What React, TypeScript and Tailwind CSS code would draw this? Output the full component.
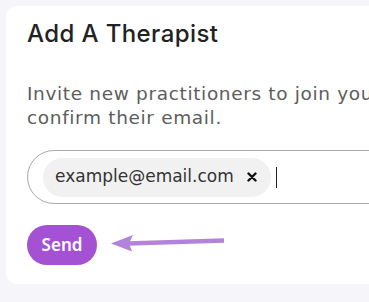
import React from "react";

export default function App() {
  return (
    <div className="w-[369px] h-[302px] overflow-hidden bg-[#f6f6fa] pt-[6px] pl-[6px]">
      <div className="w-[420px] h-[278px] bg-white rounded-l-[12px] pl-[21px] pt-[16px]">
        <h1 className="text-[24px] leading-[24px] font-medium text-[#222] font-['Inter',sans-serif] tracking-[0.4px] whitespace-nowrap">
          Add A Therapist
        </h1>
        <p className="mt-[36px] whitespace-nowrap text-[18.5px] leading-[24px] tracking-[0.65px] text-[#5d5d5d] font-['DejaVu_Sans',sans-serif]">
          Invite new practitioners to join your practice. They will need to
          <br />
          confirm their email.
        </p>
        <div className="mt-[20px] h-[54px] w-[400px] rounded-l-[27px] border border-[#a8a8a8] flex items-center pl-[15px]">
          <div className="h-[39px] rounded-full bg-[#f1f1f1] flex items-center pl-[12px] pr-[14px] font-['DejaVu_Sans',sans-serif]">
            <span className="text-[17px] text-[#333]">example@email.com</span>
            <svg width="10" height="10" viewBox="0 0 10 10" className="ml-[13px]">
              <path d="M1.5 1.5 L8.5 8.5 M8.5 1.5 L1.5 8.5" stroke="#111" strokeWidth="2.4" strokeLinecap="round" />
            </svg>
          </div>
          <div className="ml-[5px] w-[1px] h-[21px] bg-[#222]" />
        </div>
        <div className="mt-[21px] flex items-center">
          <button className="h-[40px] w-[70px] rounded-full bg-[#a451d3] text-white text-[17px] font-semibold font-['Noto_Sans',sans-serif]">
            Send
          </button>
          <svg width="120" height="24" viewBox="0 0 120 24" className="ml-[12px]">
            <path d="M19 10.5 L115 7.5" stroke="#b383dc" strokeWidth="4.5" />
            <path d="M2 10.5 L24 2 L20 10.5 L23 18.5 Z" fill="#b383dc" />
          </svg>
        </div>
      </div>
    </div>
  );
}
